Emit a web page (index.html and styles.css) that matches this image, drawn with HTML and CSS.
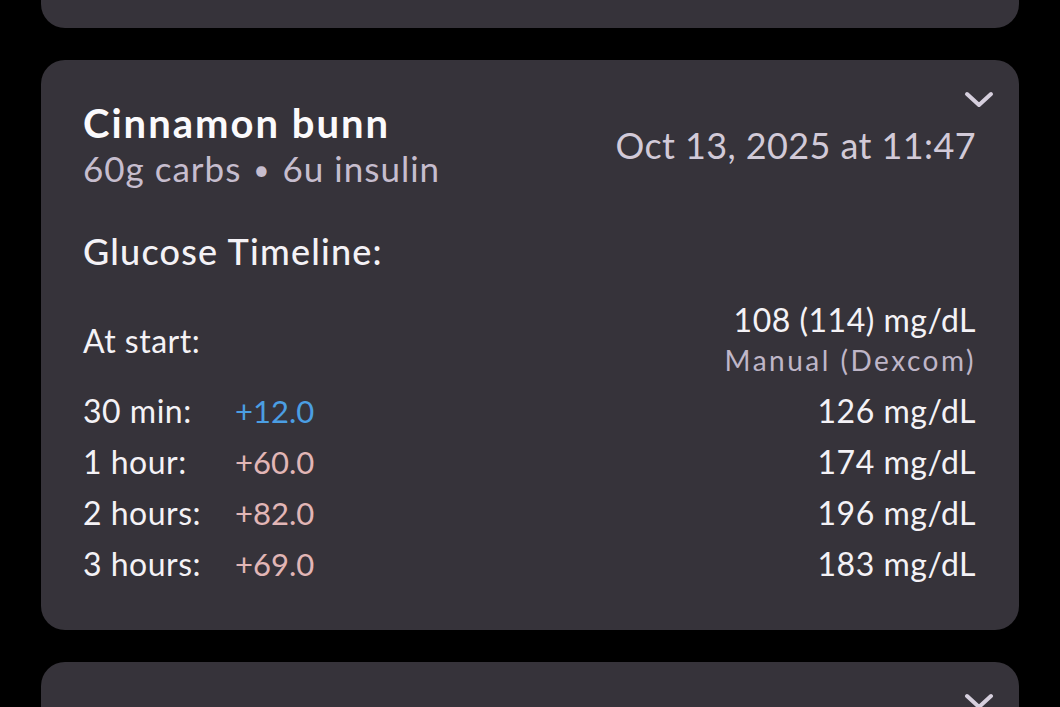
FILE: index.html
```html
<!DOCTYPE html>
<html>
<head>
<meta charset="utf-8">
<link rel="stylesheet" href="styles.css">
</head>
<body>
<div class="list">
  <div class="card card-prev"></div>
  <div class="card card-main">
    <svg class="chevron" width="30" height="18" viewBox="0 0 30 18"><path d="M3 3 L15 14 L27 3" fill="none" stroke="#d6cfdd" stroke-width="4" stroke-linecap="round" stroke-linejoin="round"/></svg>
    <div class="header">
      <div class="meal">
        <div class="title">Cinnamon bunn</div>
        <div class="sub">60g carbs <span class="dot">•</span> 6u insulin</div>
      </div>
      <div class="date">Oct 13, 2025 at 11:47</div>
    </div>
    <div class="section">Glucose Timeline:</div>
    <div class="start-row">
      <div class="label">At start:</div>
      <div class="start-val">
        <div class="val">108 (114) mg/dL</div>
        <div class="src">Manual (Dexcom)</div>
      </div>
    </div>
    <div class="row"><div class="label">30 min:</div><div class="delta down">+12.0</div><div class="val">126 mg/dL</div></div>
    <div class="row"><div class="label">1 hour:</div><div class="delta up">+60.0</div><div class="val">174 mg/dL</div></div>
    <div class="row"><div class="label">2 hours:</div><div class="delta up">+82.0</div><div class="val">196 mg/dL</div></div>
    <div class="row"><div class="label">3 hours:</div><div class="delta up">+69.0</div><div class="val">183 mg/dL</div></div>
  </div>
  <div class="card card-next">
    <svg class="chevron" width="30" height="18" viewBox="0 0 30 18"><path d="M3 3 L15 14 L27 3" fill="none" stroke="#d6cfdd" stroke-width="4" stroke-linecap="round" stroke-linejoin="round"/></svg>
  </div>
</div>
</body>
</html>
```
FILE: styles.css
```css
html, body {
  margin: 0;
  padding: 0;
  background: #000;
  overflow: hidden;
  height: 707px;
}
body {
  font-family: "Lato", "Noto Sans", sans-serif;
  color: #f4f2f6;
}
.list {
  display: flex;
  flex-direction: column;
  gap: 32px;
  padding: 0 41px;
  margin-top: -172px;
}
.card {
  background: #36333a;
  border-radius: 24px;
  position: relative;
}
.card-prev { height: 200px; }
.card-next { height: 200px; }
.card-main {
  height: 570px;
  box-sizing: border-box;
  padding: 41px 43px 40px 42px;
}
.chevron {
  position: absolute;
  right: 25px;
  top: 31px;
}
.header {
  display: flex;
  justify-content: space-between;
  align-items: center;
}
.title {
  font-size: 40px;
  font-weight: 700;
  line-height: 44px;
  letter-spacing: 2px;
  color: #fbfafc;
}
.sub {
  font-size: 35px;
  line-height: 46px;
  letter-spacing: 1px;
  color: #c6bdce;
}
.dot {
  font-size: 28px;
  vertical-align: 2px;
  margin: 0 2px;
}
.date {
  font-size: 36px;
  line-height: 44px;
  letter-spacing: 0.4px;
  color: #d2cad8;
  margin-top: -4px;
}
.section {
  font-size: 36px;
  line-height: 44px;
  font-weight: 500;
  letter-spacing: 1.2px;
  margin-top: 37px;
}
.start-row {
  display: flex;
  justify-content: space-between;
  align-items: center;
  margin-top: 27px;
  margin-bottom: 5px;
}
.start-val {
  text-align: right;
}
.start-val .val {
  line-height: 40px;
}
.src {
  font-size: 28px;
  line-height: 40px;
  color: #bfb6c8;
  letter-spacing: 2.5px;
}
.label, .val {
  font-size: 32px;
  letter-spacing: 0.5px;
}
.delta {
  font-size: 31px;
}
.row {
  display: flex;
  align-items: center;
  height: 51px;
}
.row .label {
  width: 152px;
}
.row .val {
  margin-left: auto;
}
.delta.down { color: #4b9ee3; }
.delta.up { color: #e2b6b6; }
```
